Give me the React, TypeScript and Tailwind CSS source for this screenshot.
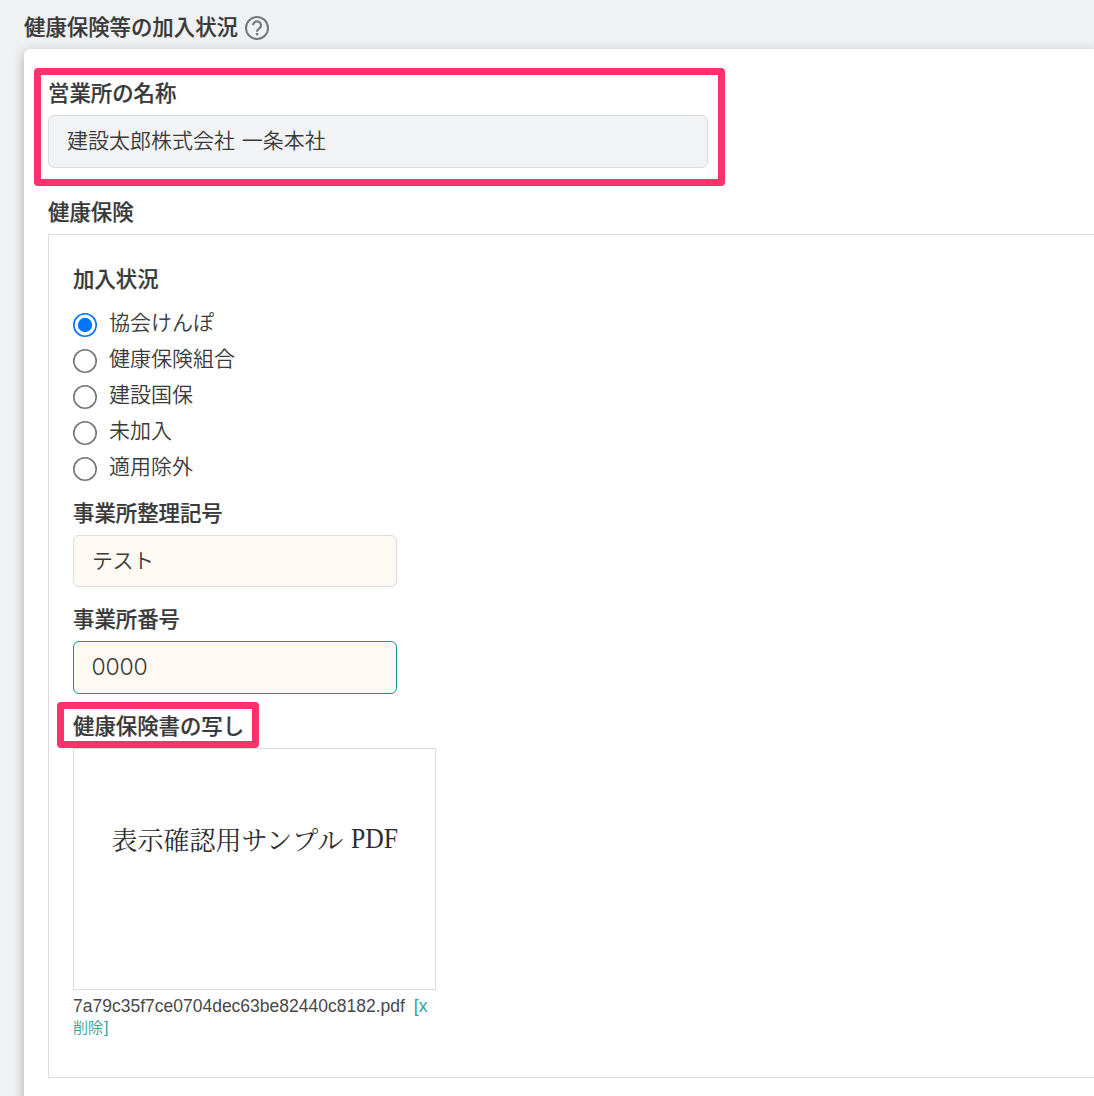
import { useState, type ReactNode } from "react";

const statuses = ["協会けんぽ", "健康保険組合", "建設国保", "未加入", "適用除外"];

function Label({ children }: { children: ReactNode }) {
  return (
    <div className="h-8 text-[21.4px] leading-[30px] font-medium whitespace-nowrap [-webkit-text-stroke:0.2px_#333]">
      {children}
    </div>
  );
}

function HelpIcon() {
  return (
    <svg className="size-6" viewBox="0 0 24 24" fill="none" stroke="#777" strokeWidth="2">
      <circle cx="12" cy="12" r="11" />
      <path d="M8 9.3a4 3.8 0 1 1 6.6 2.9c-1.5 1.2-2.6 1.8-2.6 3.5" strokeWidth="2.2" />
      <path d="M12 17v2.3" strokeWidth="2.4" />
    </svg>
  );
}

function Highlight({ className }: { className: string }) {
  return <div className={`pointer-events-none absolute rounded border-[#ff316c] ${className}`} />;
}

function Radio({ label, checked, onSelect }: { label: string; checked: boolean; onSelect: () => void }) {
  return (
    <label className="flex h-9 items-center gap-3">
      <input type="radio" name="status" className="peer sr-only" checked={checked} onChange={onSelect} />
      <svg className="size-6 shrink-0 translate-y-px" viewBox="0 0 24 24">
        <circle cx="12" cy="12" r="11.2" fill="#fff" stroke={checked ? "#0075ff" : "#767676"} strokeWidth="1.6" />
        {checked && <circle cx="12" cy="12" r="7.2" fill="#0075ff" />}
      </svg>
      <span className="-translate-y-[3px] text-[21px] leading-9">{label}</span>
    </label>
  );
}

export default function App() {
  const [status, setStatus] = useState(0);
  return (
    <div className="h-[1096px] overflow-hidden bg-[#eff1f3] pl-6 font-['Noto_Sans_CJK_JP',sans-serif] font-[350] text-[#3a3a3a]">
      <header className="flex h-[49px] items-start gap-[7px] pt-[11px]">
        <Label>健康保険等の加入状況</Label>
        <div className="pt-[5px]">
          <HelpIcon />
        </div>
      </header>
      <main className="h-[1100px] rounded-tl-md bg-white pt-7 pl-6 shadow-[0_3px_12px_rgba(0,0,0,0.3)]">
        <section className="relative w-[660px]">
          <Label>営業所の名称</Label>
          <div className="mt-1.5 h-[53px] rounded-md border border-[#dcdcdc] bg-[#f2f3f5] px-[18px] text-[21px] leading-[46px] [word-spacing:2px]">
            建設太郎株式会社 一条本社
          </div>
          <Highlight className="-top-[9px] -left-[14px] h-[118px] w-[691px] border-7" />
        </section>
        <section className="pt-7">
          <Label>健康保険</Label>
          <div className="mt-[6px] h-[844px] border border-r-0 border-[#dcdcdc] pt-7 pl-6">
            <Label>加入状況</Label>
            <div className="pt-[11px]">
              {statuses.map((s, i) => (
                <Radio key={s} label={s} checked={status === i} onSelect={() => setStatus(i)} />
              ))}
            </div>
            <div className="w-[324px] pt-[11px]">
              <Label>事業所整理記号</Label>
              <div className="mt-[6px] h-[52px] rounded-md border border-[#dcdcdc] bg-[#fff9f3] px-[18px] text-[21px] leading-[46px] tracking-[-0.5px]">
                テスト
              </div>
            </div>
            <div className="w-[324px] pt-4">
              <Label>事業所番号</Label>
              <div className="mt-[6px] h-[53px] rounded-md border border-[#159587] bg-[#fff9f3] px-[17.5px] font-['Inter',sans-serif] text-[23px] leading-[50px] font-light tracking-[-0.2px]">
                0000
              </div>
            </div>
            <div className="relative w-[363px] pt-4">
              <Label>健康保険書の写し</Label>
              <Highlight className="top-2 -left-4 h-[46px] w-[202px] border-7" />
              <div className="mt-[6px] flex h-[242px] justify-center border border-[#dcdcdc] pt-[70px] font-['Noto_Serif_CJK_JP','Liberation_Serif',serif] text-[26px] leading-10 font-normal whitespace-nowrap text-[#2c2c30]">
                <span>表示確認用サンプル</span>
                <span className="-mr-[6px] ml-[8px] origin-left scale-x-[0.9] font-['Liberation_Serif',serif] text-[28.5px]">PDF</span>
              </div>
              <div className="pt-[5px] font-['Liberation_Sans','Noto_Sans_CJK_JP',sans-serif] text-[17.5px] leading-[22px] text-[#484848]">
                <div className="flex gap-[9px] whitespace-nowrap">
                  <span>7a79c35f7ce0704dec63be82440c8182.pdf</span>
                  <span className="text-[#35a194]">[x</span>
                </div>
                <div className="text-[15px] leading-[22px] text-[#35a194]">削除<span className="ml-px text-[16px]">]</span></div>
              </div>
            </div>
          </div>
        </section>
      </main>
    </div>
  );
}
